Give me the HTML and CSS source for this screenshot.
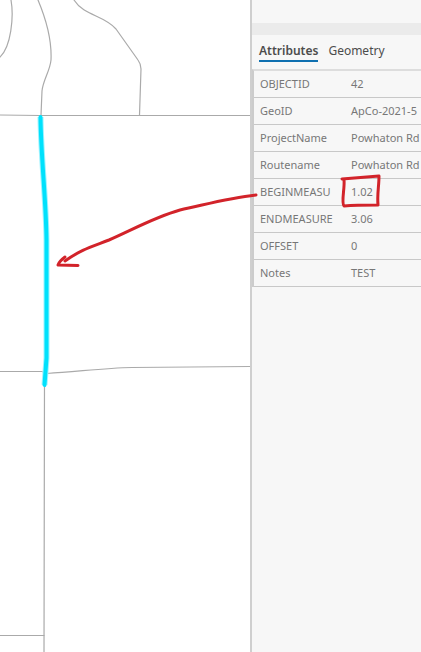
FILE: index.html
```html
<!DOCTYPE html>
<html lang="en">

<head>
  <meta charset="UTF-8">
  <meta name="viewport" content="width=device-width, initial-scale=1.0">
  <title>Route Attributes</title>
  <link rel="stylesheet" href="styles.css">
</head>

<body>
  <div class="container">
    <div class="map">
      <svg class="map-lines" viewBox="0 0 250 652" preserveAspectRatio="xMinYMin slice">
        <g class="road">
          <path d="M11 0C14 17 11 47 0 57" />
          <path d="M38 0C46 19 52 38 51 60C50 71 43 80 42 91L41 115" />
          <path d="M74 0C84 16 104 15 116 29L138 60Q141 64 141 69L139.500 115" />
          <path d="M0 115L40 115.500H250" />
          <path d="M0 371.500H42L47 373.500C76 372 103 368 132 367.500L250 366.500" />
          <path d="M44.500 380L44 652" />
          <path d="M0 635.500H44" />
        </g>
        <path class="route-glow" d="M40.500 117C41 158 46 199 46.500 240V358L44.500 385" />
        <path class="route" d="M40.500 117C41 158 46 199 46.500 240V358L44.500 385" />
      </svg>
    </div>
    <div class="panel">
      <div class="band"></div>
      <div class="tabs">
        <button class="tab active" type="button">Attributes</button>
        <button class="tab" type="button">Geometry</button>
      </div>
      <table class="attributes">
        <tr>
          <th scope="row">OBJECTID</th>
          <td>42</td>
        </tr>
        <tr>
          <th scope="row">GeoID</th>
          <td>ApCo-2021-5</td>
        </tr>
        <tr>
          <th scope="row">ProjectName</th>
          <td>Powhaton Rd</td>
        </tr>
        <tr>
          <th scope="row">Routename</th>
          <td>Powhaton Rd</td>
        </tr>
        <tr>
          <th scope="row">BEGINMEASU</th>
          <td>1.02</td>
        </tr>
        <tr>
          <th scope="row">ENDMEASURE</th>
          <td>3.06</td>
        </tr>
        <tr>
          <th scope="row">OFFSET</th>
          <td>0</td>
        </tr>
        <tr>
          <th scope="row">Notes</th>
          <td>TEST</td>
        </tr>
      </table>
    </div>
    <!-- hand drawn notes over the map and the table -->
    <svg class="notes" width="421" height="652" viewBox="0 0 421 652">
      <path d="M256 195C228 198 204 205 180 210C155 217 132 230 109 240C91 247 82 249 65 261" />
      <path d="M65 257C61 260 59 262 58 265L78 265.500" />
      <path d="M342 179C354 178 367 177 379 176C379 186 377 195 378 205C366 205 355 205 344 206C341 203 345 187 344 180" />
    </svg>
  </div>
</body>

</html>
```
FILE: styles.css
```css
body {
  margin: 0;
  background: #ffffff;
  font-family: 'Noto Sans', 'Open Sans', sans-serif;
  font-size: 11px;
  color: #777777;
}

.container {
  position: relative;
  display: flex;
  min-height: 100vh;
  overflow: hidden;
}

.map {
  flex: 1;
  min-width: 0;
}

.map-lines {
  display: block;
  width: 100%;
}

.map-lines path,
.notes path {
  fill: none;
  stroke-linecap: round;
  stroke-linejoin: round;
}

.road {
  stroke: #aaaaaa;
  stroke-width: 1.2;
}

.map-lines .route-glow {
  stroke: #9df3ff;
  stroke-width: 6;
  stroke-linecap: butt;
}

.map-lines .route {
  stroke: #00e1fc;
  stroke-width: 4;
}

.panel {
  flex: 0 0 169px;
  background: #f7f7f7;
  border-left: 2px solid #cfcfcf;
}

.band {
  height: 12px;
  margin-top: 23px;
  background: #ebebeb;
}

.tabs {
  display: flex;
  gap: 10px;
  padding: 6px 7px 7px;
}

.tab {
  padding: 0;
  border: 0;
  border-bottom: 2px solid transparent;
  background: none;
  font-family: inherit;
  font-size: 12px;
  line-height: 19px;
  color: #4c4c4c;
}

.tab.active {
  border-color: #0f70b0;
  font-weight: 600;
}

.attributes {
  width: 100%;
  border-collapse: separate;
  border-spacing: 0;
  border-top: 2px solid #dddddd;
  border-left: 2px solid #cccccc;
  table-layout: fixed;
}

.attributes th,
.attributes td {
  height: 26px;
  padding: 0;
  border-bottom: 1px solid #c8c8c8;
  font-weight: normal;
  line-height: 20px;
  text-align: left;
  white-space: nowrap;
}

.attributes th {
  width: 91px;
  padding-left: 6px;
}

.notes {
  position: absolute;
  top: 0;
  right: 0;
  pointer-events: none;
  stroke: #d2232a;
  stroke-width: 3;
}
```
